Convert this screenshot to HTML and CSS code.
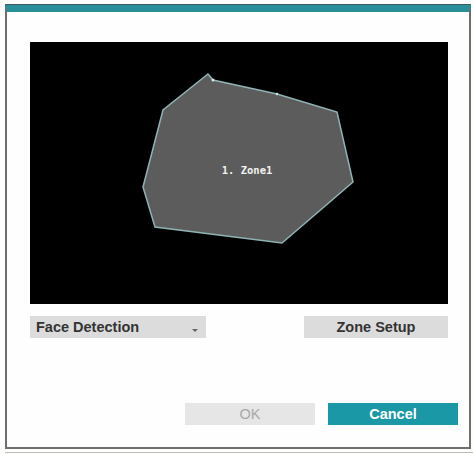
FILE: index.html
```html
<!DOCTYPE html>
<html lang="en">

<head>
    <meta charset="UTF-8">
    <title>Zone Setup</title>
    <link rel="stylesheet" href="styles.css">
</head>

<body>
    <div class="dialog">
        <div class="canvas">
            <svg width="418" height="262" viewBox="0 0 418 262">
                <polygon class="zone" points="178,32 183,38 247,52 307,70 323,140 252,201 125,185 113,145 133,68" />
                <circle class="pt" cx="183" cy="38" r="1.5" />
                <circle class="pt" cx="247" cy="52" r="1.2" />
                <text class="zoneName" x="217" y="132" text-anchor="middle">1. Zone1</text>
            </svg>
        </div>
        <div class="tools">
            <div class="select">
                <span>Face Detection</span>
                <em></em>
            </div>
            <a href="javascript:void(0);" class="btn setup">Zone Setup</a>
        </div>
        <div class="footer">
            <a href="javascript:void(0);" class="btn ok">OK</a>
            <a href="javascript:void(0);" class="btn cancel">Cancel</a>
        </div>
    </div>
    <div class="below"></div>
</body>

</html>
```

FILE: styles.css
```css
* {
    margin: 0;
    padding: 0;
    box-sizing: border-box;
}

body {
    background: #fdfdfb;
    font-family: 'Liberation Sans', Arial, sans-serif;
}

a {
    text-decoration: none;
}

.dialog {
    width: 466px;
    height: 444px;
    margin: 5px 0 0 5px;
    border: 2px solid #6e6e6e;
    border-top: 7px solid #2b8f99;
    box-shadow: 0 -1px 0 #3d5c60;
    background: #fefefe;
    padding: 30px 0 0 23px;
    display: flex;
    flex-direction: column;
}

.canvas {
    width: 418px;
    height: 262px;
    background: #000;
}

.canvas svg {
    display: block;
}

.zone {
    fill: #5c5c5c;
    stroke: #8fb3b5;
    stroke-width: 1.5;
}

.pt {
    fill: #d8e6e6;
}

.zoneName {
    fill: #f2f2f2;
    font-family: 'DejaVu Sans Mono', monospace;
    font-size: 10.5px;
    font-weight: bold;
}

.tools {
    display: flex;
    justify-content: space-between;
    width: 418px;
    margin-top: 12px;
}

.select {
    width: 176px;
    height: 22px;
    background: #dcdcdc;
    display: flex;
    align-items: center;
    justify-content: space-between;
    padding: 0 8px 0 6px;
    font-size: 14.5px;
    font-weight: bold;
    color: #333;
}

.select em {
    width: 0;
    height: 0;
    border-left: 3px solid transparent;
    border-right: 3px solid transparent;
    border-top: 3px solid #666;
    margin-top: 7px;
}

.btn {
    display: flex;
    align-items: center;
    justify-content: center;
    height: 22px;
    font-size: 14.5px;
    font-weight: bold;
}

.setup {
    width: 144px;
    background: #dcdcdc;
    color: #333;
}

.footer {
    display: flex;
    gap: 13px;
    margin: 65px 0 0 155px;
}

.ok {
    width: 130px;
    background: #e6e6e6;
    color: #a8a8a8;
    font-weight: normal;
}

.cancel {
    width: 130px;
    background: #1a98a6;
    color: #fff;
}

.below {
    width: 468px;
    height: 1px;
    margin: 3px 0 0 5px;
    background: #bdbdbd;
}
```
